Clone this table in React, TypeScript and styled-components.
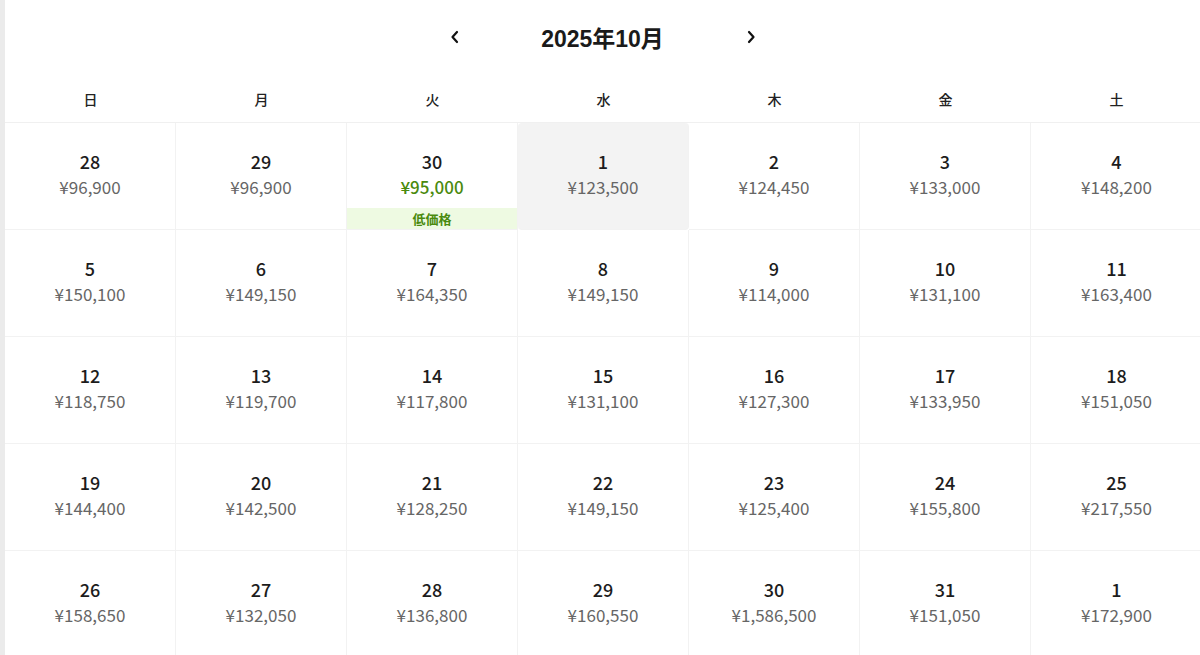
import styled, { createGlobalStyle } from "styled-components";

const GlobalStyle = createGlobalStyle`
    html, body {
        margin: 0;
        padding: 0;
        background: #ffffff;
    }
    body {
        font-family: "Noto Sans CJK JP", "Noto Sans", sans-serif;
        color: #222222;
    }
`;

const Page = styled.div`
    width: 1200px;
    height: 655px;
    overflow: hidden;
    box-sizing: border-box;
    border-left: 5px solid #ebebeb;
`;

const Header = styled.header`
    height: 76px;
    padding-bottom: 3px;
    box-sizing: border-box;
    display: flex;
    justify-content: center;
    align-items: center;
    gap: 75px;
`;

const NavButton = styled.button`
    width: 14px;
    height: 20px;
    padding: 0;
    border: none;
    background: none;
    display: flex;
    align-items: center;
    justify-content: center;
    color: #111111;
    cursor: pointer;
`;

const Title = styled.h1`
    margin: 0;
    width: 132px;
    text-align: center;
    font-family: "Liberation Sans", "Noto Sans CJK JP", sans-serif;
    font-size: 23px;
    font-weight: 700;
    color: #1a1a1a;
`;

const Grid = styled.div`
    display: grid;
    grid-template-columns: repeat(7, 171px);
`;

const Weekday = styled.div`
    height: 46px;
    display: flex;
    align-items: center;
    justify-content: center;
    font-size: 14px;
    font-weight: 500;
    color: #222222;
    border-bottom: 1px solid #f0f0f0;
`;

const Cell = styled.div<{ $selected?: boolean }>`
    height: 107px;
    box-sizing: border-box;
    display: flex;
    flex-direction: column;
    align-items: center;
    padding-top: 25px;
    border-right: 1px solid #f2f2f2;
    border-bottom: 1px solid #f2f2f2;
    background: ${props => props.$selected ? "#f3f3f3" : "#ffffff"};
    border-radius: ${props => props.$selected ? "4px" : "0"};
    &:nth-child(7n) {
        border-right: none;
    }
`;

const Day = styled.div`
    font-size: 18px;
    line-height: 26px;
    font-weight: 500;
    color: #1c1c1c;
`;

const Price = styled.div<{ $low?: boolean }>`
    font-size: 17px;
    line-height: 26px;
    font-weight: ${props => props.$low ? 500 : 400};
    color: ${props => props.$low ? "#4a8a0e" : "#666666"};
`;

const Badge = styled.div`
    margin-top: auto;
    align-self: stretch;
    height: 21px;
    display: flex;
    align-items: center;
    justify-content: center;
    background: #eefae2;
    color: #4a8a0e;
    font-size: 13px;
    font-weight: 700;
`;

interface DayInfo {
    day: number;
    price: string;
    low?: boolean;
    selected?: boolean;
}

const weekdays = ["日", "月", "火", "水", "木", "金", "土"];

const days: DayInfo[] = [
    { day: 28, price: "¥96,900" },
    { day: 29, price: "¥96,900" },
    { day: 30, price: "¥95,000", low: true },
    { day: 1, price: "¥123,500", selected: true },
    { day: 2, price: "¥124,450" },
    { day: 3, price: "¥133,000" },
    { day: 4, price: "¥148,200" },
    { day: 5, price: "¥150,100" },
    { day: 6, price: "¥149,150" },
    { day: 7, price: "¥164,350" },
    { day: 8, price: "¥149,150" },
    { day: 9, price: "¥114,000" },
    { day: 10, price: "¥131,100" },
    { day: 11, price: "¥163,400" },
    { day: 12, price: "¥118,750" },
    { day: 13, price: "¥119,700" },
    { day: 14, price: "¥117,800" },
    { day: 15, price: "¥131,100" },
    { day: 16, price: "¥127,300" },
    { day: 17, price: "¥133,950" },
    { day: 18, price: "¥151,050" },
    { day: 19, price: "¥144,400" },
    { day: 20, price: "¥142,500" },
    { day: 21, price: "¥128,250" },
    { day: 22, price: "¥149,150" },
    { day: 23, price: "¥125,400" },
    { day: 24, price: "¥155,800" },
    { day: 25, price: "¥217,550" },
    { day: 26, price: "¥158,650" },
    { day: 27, price: "¥132,050" },
    { day: 28, price: "¥136,800" },
    { day: 29, price: "¥160,550" },
    { day: 30, price: "¥1,586,500" },
    { day: 31, price: "¥151,050" },
    { day: 1, price: "¥172,900" },
];

function Chevron({ dir }: { dir: "left" | "right" }) {
    const d = dir === "left" ? "M7 2 L2.5 7 L7 12" : "M3 2 L7.5 7 L3 12";
    return (
        <svg width="10" height="14" viewBox="0 0 10 14" fill="none">
            <path d={d} stroke="currentColor" strokeWidth="2.2" strokeLinecap="round" strokeLinejoin="round" />
        </svg>
    );
}

function App() {
    return (
        <Page>
            <GlobalStyle />
            <Header>
                <NavButton aria-label="前の月"><Chevron dir="left" /></NavButton>
                <Title>2025年10月</Title>
                <NavButton aria-label="次の月"><Chevron dir="right" /></NavButton>
            </Header>
            <Grid>
                {weekdays.map(w => <Weekday key={w}>{w}</Weekday>)}
            </Grid>
            <Grid>
                {days.map((d, i) => (
                    <Cell key={i} $selected={d.selected}>
                        <Day>{d.day}</Day>
                        <Price $low={d.low}>{d.price}</Price>
                        {d.low && <Badge>低価格</Badge>}
                    </Cell>
                ))}
            </Grid>
        </Page>
    );
}

export default App;
